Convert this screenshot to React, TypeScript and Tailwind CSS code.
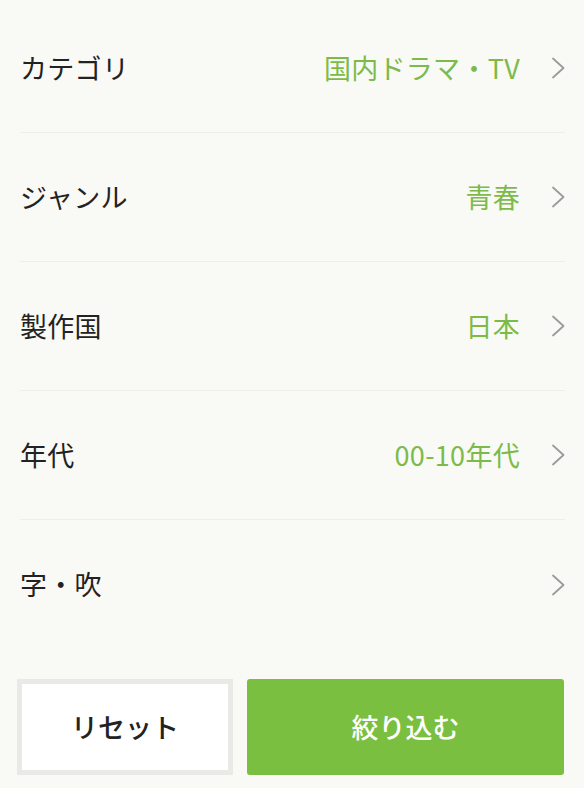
const rows = [
  { label: 'カテゴリ', value: '国内ドラマ・TV' },
  { label: 'ジャンル', value: '青春' },
  { label: '製作国', value: '日本' },
  { label: '年代', value: '00-10年代' },
  { label: '字・吹', value: '' },
];

function Chevron() {
  return (
    <svg width="14" height="22" viewBox="0 0 14 22" className="ml-[31px] shrink-0" fill="none">
      <polyline points="2,1.5 12.5,11 2,20.5" stroke="#9b9b9b" strokeWidth="1.8" strokeLinecap="round" strokeLinejoin="round" />
    </svg>
  );
}

export default function App() {
  return (
    <main
      className="w-[584px] h-[788px] bg-[#f9f9f6] flex flex-col overflow-hidden"
      style={{ fontFamily: '"Noto Sans CJK JP", "Noto Sans", sans-serif' }}
    >
      {/* Filter rows */}
      <ul className="pt-[4px] pl-[20px] pr-[19px]">
        {rows.map((row, i) => (
          <li
            key={row.label}
            className={`h-[129px] flex items-center ${i < rows.length - 1 ? 'border-b border-[#eeeeea]' : ''}`}
          >
            <span className="text-[27px] font-normal tracking-[0.3px] text-[#222222]">{row.label}</span>
            <span className="ml-auto text-[27px] font-normal tracking-[0.3px] text-[#7cbb48]">{row.value}</span>
            <Chevron />
          </li>
        ))}
      </ul>

      {/* Actions */}
      <div className="mt-[30px] pl-[17px] pr-[20px] flex gap-[14px]">
        <button className="w-[216px] h-[96px] bg-white border-[5px] border-[#e9e9e6] text-[27px] font-medium text-[#222222]">
          リセット
        </button>
        <button className="flex-1 h-[96px] bg-[#7bbf40] rounded-[3px] text-[27px] font-medium text-white">
          絞り込む
        </button>
      </div>
    </main>
  );
}
